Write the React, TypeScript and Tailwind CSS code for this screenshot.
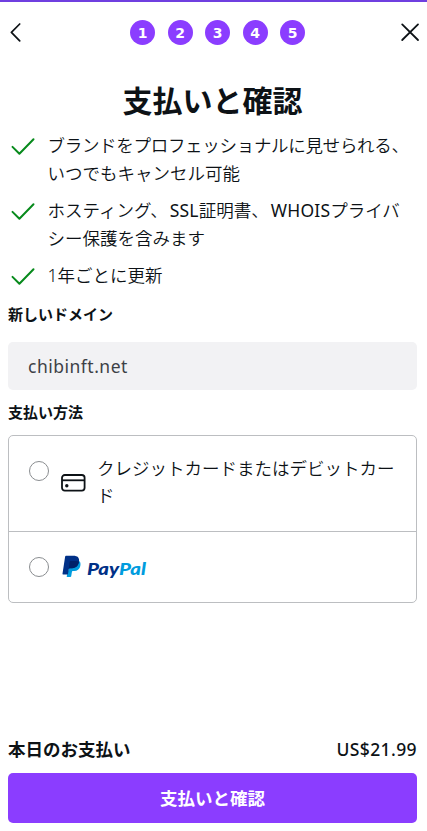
import React, { useState } from 'react';

const steps = [1, 2, 3, 4, 5];

const benefits = [
  { id: 'brand', lines: [['ブランドをプロフェッショナルに見せられる、'], ['いつでもキャンセル可能']] },
  { id: 'hosting', lines: [['ホスティング、', 'SSL', '証明書、', 'WHOIS', 'プライバ'], ['シー保護を含みます']] },
  { id: 'renewal', lines: [['1年ごとに更新']] },
];

const isLatin = (text: string) => /^[A-Z0-9]+$/.test(text);

const CheckMark: React.FC = () => (
  <svg className="mt-[3px] h-[24px] w-[24px] shrink-0" viewBox="0 0 24 24" fill="none" stroke="#078a1c" strokeWidth="2">
    <path d="M1.5 12.9 L8.4 19.7 L22.5 5.3" strokeLinecap="round" strokeLinejoin="round" />
  </svg>
);

const CardIcon: React.FC = () => (
  <svg className="h-[18px] w-[25px]" viewBox="0 0 25 18" fill="none" stroke="#0d1216" strokeWidth="1.8">
    <rect x="1" y="1" width="22.6" height="15.6" rx="2.8" />
    <path d="M1 6.3 H23.6" />
    <circle cx="5.8" cy="11.8" r="1.7" fill="#0d1216" stroke="none" />
  </svg>
);

const PayPalLogo: React.FC = () => (
  <svg className="h-[26px] w-[88px]" viewBox="0 0 88 26">
    <path d="M8 9.4 L17.6 7.3 C19.6 9.6 18.6 17.1 12.3 17.1 H10.8 C10.2 17.1 10 17.4 9.9 17.9 L9.2 22.2 C9.1 22.8 8.8 23 8.3 23 H5.2 C4.8 23 4.6 22.7 4.7 22.3 Z" fill="#009cde" />
    <path d="M4 1.8 H11.2 C15.7 1.8 17.7 3.9 17 7.8 C16.2 12.2 13.5 14.2 9.6 14.2 H7.8 C7.2 14.2 6.9 14.5 6.8 15 L5.9 20.4 H1 C.6 20.4 .4 20.1 .5 19.7 L3.1 2.7 C3.2 2.1 3.5 1.8 4 1.8 Z" fill="#003087" />
    <path d="M7.5 8.2 C7.6 7.5 8 7.1 8.7 7.1 H13.7 C15 7.1 16.2 7.3 17 7.7 C16.3 12.1 13.5 14.2 9.6 14.2 H7.8 C7.2 14.2 6.9 14.5 6.8 15 Z" fill="#012169" />
    <text x="25" y="20.6" fontFamily="Lato, sans-serif" fontSize="17" fontWeight="900" fontStyle="italic" textLength="59" lengthAdjust="spacingAndGlyphs">
      <tspan fill="#003087">Pay</tspan>
      <tspan fill="#009cde">Pal</tspan>
    </text>
  </svg>
);

const App: React.FC = () => {
  const [method, setMethod] = useState('');

  const radioClass =
    'h-5 w-5 shrink-0 appearance-none rounded-full border-[1.25px] border-[#8a8d90] bg-white checked:border-[6px] checked:border-[#8b3dff]';

  return (
    <div className="flex h-[831px] flex-col bg-white font-['Noto_Sans','Noto_Sans_CJK_JP',sans-serif] text-[17.5px] leading-[28px] font-[350] text-[#0d1216]">
      <div className="h-[2px] shrink-0 bg-[#6f3fe0]" />

      {/* Header with steps */}
      <header className="flex h-[61px] shrink-0 items-center justify-between pr-[7px] pl-[5px]">
        <button type="button" aria-label="戻る" className="w-[30px]">
          <svg className="h-5 w-5" viewBox="0 0 20 20" fill="none" stroke="#0d1216" strokeWidth="1.7" strokeLinecap="round" strokeLinejoin="round">
            <path d="M14.7 1 L6.4 9.4 L14.7 17.9" />
          </svg>
        </button>
        <div className="flex gap-[12.5px]">
          {steps.map((step) => (
            <span key={step} className="flex h-[25px] w-[25px] items-center justify-center rounded-full bg-[#8b3dff] font-['DejaVu_Sans',sans-serif] text-[14px] font-bold text-white">
              {step}
            </span>
          ))}
        </div>
        <button type="button" aria-label="閉じる">
          <svg className="h-5 w-5" viewBox="0 0 20 20" fill="none" stroke="#0d1216" strokeWidth="1.8" strokeLinecap="round">
            <path d="M2.2 1.4 L18 17 M18 1.4 L2.2 17" />
          </svg>
        </button>
      </header>

      <main className="flex flex-1 flex-col px-2">
        <h1 className="mt-[18px] pr-[2px] text-center text-[30px] leading-[40px] font-bold">支払いと確認</h1>

        <ul className="mt-[10px] flex flex-col gap-[9px]">
          {benefits.map((item) => (
            <li key={item.id} className="flex gap-[12.5px] pl-[3px]">
              <CheckMark />
              <div>
                {item.lines.map((parts) => (
                  <p key={parts[0]} className={parts[0].length > 20 ? 'tracking-[-0.3px] whitespace-nowrap' : 'whitespace-nowrap'}>
                    {parts.map((part) => (
                      <span key={part} className={isLatin(part) ? 'ml-[2px] font-normal tracking-[0.2px]' : ''}>{part}</span>
                    ))}
                  </p>
                ))}
              </div>
            </li>
          ))}
        </ul>

        <h2 className="mt-[14px] text-[15px] leading-[22px] font-bold">新しいドメイン</h2>
        <div className="mt-[17px] mr-[2px] flex h-12 shrink-0 items-center rounded-[5px] bg-[#f2f2f4] px-5 pb-px font-normal tracking-[0.5px] text-[#3d4146]">
          chibinft.net
        </div>

        {/* Payment methods */}
        <h2 className="mt-[11px] text-[15px] leading-[22px] font-bold">支払い方法</h2>
        <div className="mt-[12px] mr-[2px] rounded-[5px] border border-[#bcbec1]">
          <label className="flex h-[96px] border-b border-[#bcbec1] pt-[20px] pl-5">
            <input type="radio" name="method" checked={method === 'card'} onChange={() => setMethod('card')} className={`${radioClass} mt-[5px]`} />
            <span className="mt-[18px] ml-[12px] shrink-0">
              <CardIcon />
            </span>
            <span className="-mt-px ml-[11px] w-[300px] leading-[27px]">クレジットカードまたはデビットカード</span>
          </label>
          <label className="flex h-[70px] items-center pl-5">
            <input type="radio" name="method" checked={method === 'paypal'} onChange={() => setMethod('paypal')} className={radioClass} />
            <span className="ml-[13px]">
              <PayPalLogo />
            </span>
          </label>
        </div>

        {/* Total and submit */}
        <div className="mt-auto mr-[2px] flex justify-between font-medium">
          <span className="font-bold">本日のお支払い</span>
          <span className="tracking-[0.4px]">US$21.99</span>
        </div>
        <button type="button" className="mt-[10px] mr-[2px] mb-2 h-[50px] shrink-0 rounded-[5px] bg-[#8b3dff] pb-px font-bold text-white">
          支払いと確認
        </button>
      </main>
    </div>
  );
};

export default App;
